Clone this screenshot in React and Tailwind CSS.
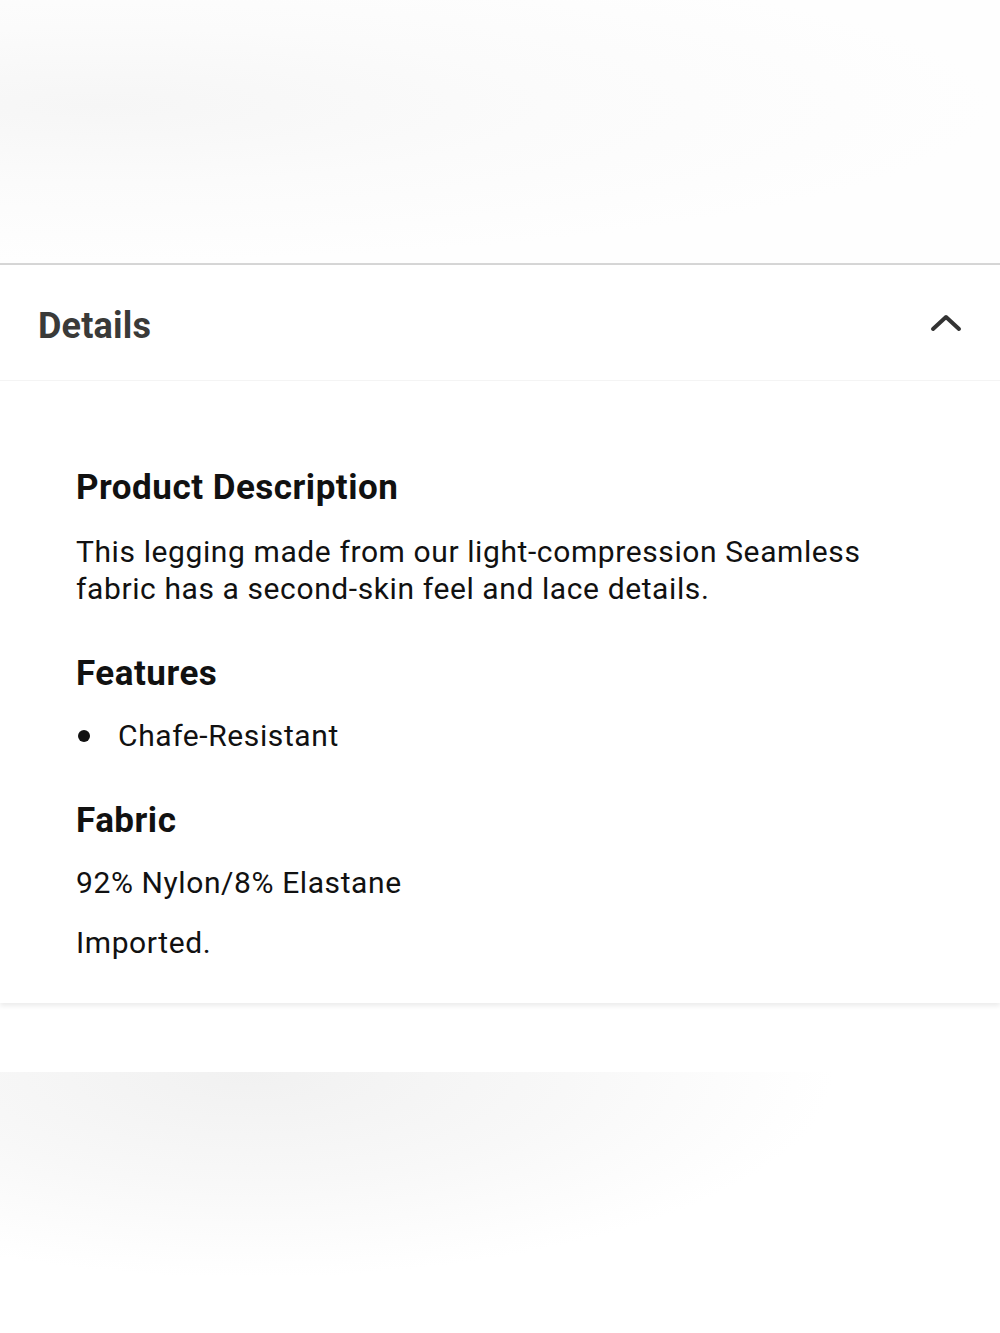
import React, { useState } from "react";

const Section = ({ title, children }) => (
  <div>
    <h3 className="text-[35px] font-bold leading-[40px] tracking-[0.5px] text-[#111]">{title}</h3>
    {children}
  </div>
);

const App = () => {
  const [open, setOpen] = useState(true);

  return (
    <div className="min-h-[1333px] w-full bg-white font-['Roboto',sans-serif] text-[#111]">
      {/* product image area (faded) */}
      <div className="h-[265px] bg-[radial-gradient(ellipse_at_10%_40%,#f6f6f6_0%,#fbfbfb_35%,#fefefe_70%)] border-b-2 border-[#d6d6d6]" />

      {/* accordion */}
      <div className="bg-white shadow-[0_3px_5px_rgba(0,0,0,0.08)]">
        <button
          onClick={() => setOpen(!open)}
          className="flex h-[116px] w-full items-center justify-between border-b border-[#f4f4f4] px-[38px]"
        >
          <span className="pt-[6px] text-[36px] font-bold tracking-[0.2px] text-[#3a3a38]">Details</span>
          <svg width="32" height="20" viewBox="0 0 32 20" fill="none">
            <path d="M3 16 L16 4 L29 16" stroke="#333" strokeWidth="4" strokeLinecap="round" strokeLinejoin="round" />
          </svg>
        </button>

        {open && (
          <div className="flex flex-col gap-[47px] px-[76px] pt-[87px] pb-[42px] text-[30px] leading-[37px] tracking-[0.6px]">
            <Section title="Product Description">
              <p className="mt-[25px] max-w-[800px]">
                This legging made from our light-compression Seamless fabric has a second-skin feel and lace details.
              </p>
            </Section>

            <Section title="Features">
              <ul className="mt-[23px]">
                <li className="flex items-center">
                  <span className="mr-[28px] ml-[2px] h-[12px] w-[12px] rounded-full bg-[#111]" />
                  Chafe-Resistant
                </li>
              </ul>
            </Section>

            <Section title="Fabric">
              <p className="mt-[23px]">92% Nylon/8% Elastane</p>
              <p className="mt-[23px]">Imported.</p>
            </Section>
          </div>
        )}
      </div>

      {/* next image area (faded) */}
      <div className="mt-[69px] h-[264px] bg-[radial-gradient(ellipse_at_25%_0%,#f1f1f1_0%,#f8f8f8_30%,#ffffff_55%)]" />
    </div>
  );
};

export default App;
